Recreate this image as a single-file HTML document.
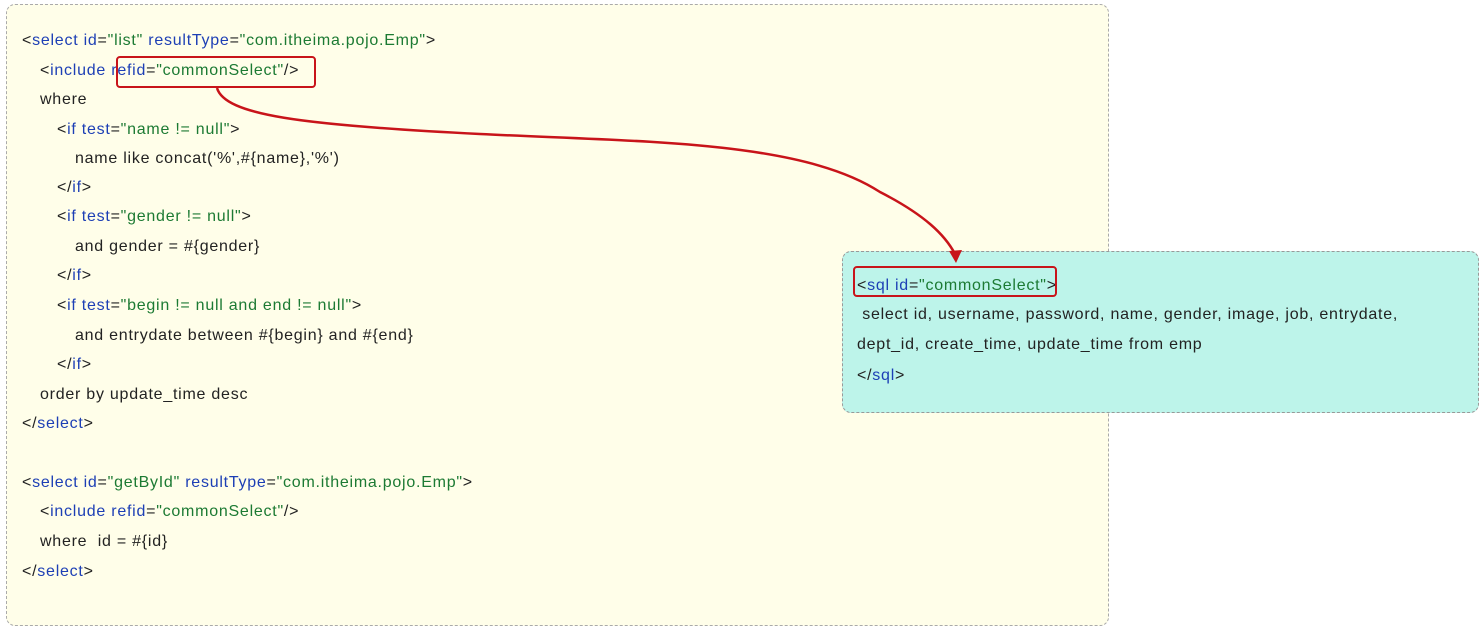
<!DOCTYPE html>
<html><head><meta charset="utf-8"><style>
body{margin:0;width:1480px;height:593px;background:#fff;position:relative;overflow:hidden;font-family:"Liberation Sans","DejaVu Sans",sans-serif;font-size:16px;letter-spacing:0.75px;color:#222}
.box1{position:absolute;left:6px;top:4px;width:1101px;height:620px;background:#fffee9;border:1px dashed #aaa;border-radius:9px}
.box2{position:absolute;left:842px;top:251px;width:635px;height:160px;background:#bdf4ea;border:1px dashed #999;border-radius:9px}
.l{position:absolute;white-space:pre;line-height:18px;transform:translateY(-8px)}
.b{color:#1d3fb5}.g{color:#1c7a33}
.r{position:absolute;border:2.5px solid #c8141a;border-radius:4px}
</style></head><body>
<div class="box1"></div>
<div class="box2"></div>
<div class="l" style="left:22px;top:40px">&lt;<span class="b">select id</span>=<span class="g">"list"</span> <span class="b">resultType</span>=<span class="g">"com.itheima.pojo.Emp"</span>&gt;</div>
<div class="l" style="left:40px;top:70px">&lt;<span class="b">include refid</span>=<span class="g">"commonSelect"</span>/&gt;</div>
<div class="l" style="left:40px;top:99px">where</div>
<div class="l" style="left:57px;top:129px">&lt;<span class="b">if test</span>=<span class="g">"name != null"</span>&gt;</div>
<div class="l" style="left:75px;top:158px">name like concat('%',#{name},'%')</div>
<div class="l" style="left:57px;top:187px">&lt;/<span class="b">if</span>&gt;</div>
<div class="l" style="left:57px;top:216px">&lt;<span class="b">if test</span>=<span class="g">"gender != null"</span>&gt;</div>
<div class="l" style="left:75px;top:246px">and gender = #{gender}</div>
<div class="l" style="left:57px;top:275px">&lt;/<span class="b">if</span>&gt;</div>
<div class="l" style="left:57px;top:305px">&lt;<span class="b">if test</span>=<span class="g">"begin != null and end != null"</span>&gt;</div>
<div class="l" style="left:75px;top:335px">and entrydate between #{begin} and #{end}</div>
<div class="l" style="left:57px;top:364px">&lt;/<span class="b">if</span>&gt;</div>
<div class="l" style="left:40px;top:394px">order by update_time desc</div>
<div class="l" style="left:22px;top:423px">&lt;/<span class="b">select</span>&gt;</div>
<div class="l" style="left:22px;top:482px">&lt;<span class="b">select id</span>=<span class="g">"getById"</span> <span class="b">resultType</span>=<span class="g">"com.itheima.pojo.Emp"</span>&gt;</div>
<div class="l" style="left:40px;top:511px">&lt;<span class="b">include refid</span>=<span class="g">"commonSelect"</span>/&gt;</div>
<div class="l" style="left:40px;top:541px">where  id = #{id}</div>
<div class="l" style="left:22px;top:571px">&lt;/<span class="b">select</span>&gt;</div>

<div class="l" style="left:857px;top:285px">&lt;<span class="b">sql id</span>=<span class="g">"commonSelect"</span>&gt;</div>
<div class="l" style="left:857px;top:314px"> select id, username, password, name, gender, image, job, entrydate,</div>
<div class="l" style="left:857px;top:344px">dept_id, create_time, update_time from emp</div>
<div class="l" style="left:857px;top:375px">&lt;/<span class="b">sql</span>&gt;</div>

<div class="r" style="left:116px;top:56px;width:196px;height:28px"></div>
<div class="r" style="left:853px;top:266px;width:200px;height:27px"></div>
<svg style="position:absolute;left:0;top:0" width="1480" height="593">
<path d="M217 88 C225 115 300 125 480 134 C640 142 800 140 880 192 C925 215 945 235 955 254" fill="none" stroke="#c8141a" stroke-width="2.5"/>
<path d="M949 251 L956 263 L962 250 Z" fill="#c8141a"/>
</svg>
</body></html>
